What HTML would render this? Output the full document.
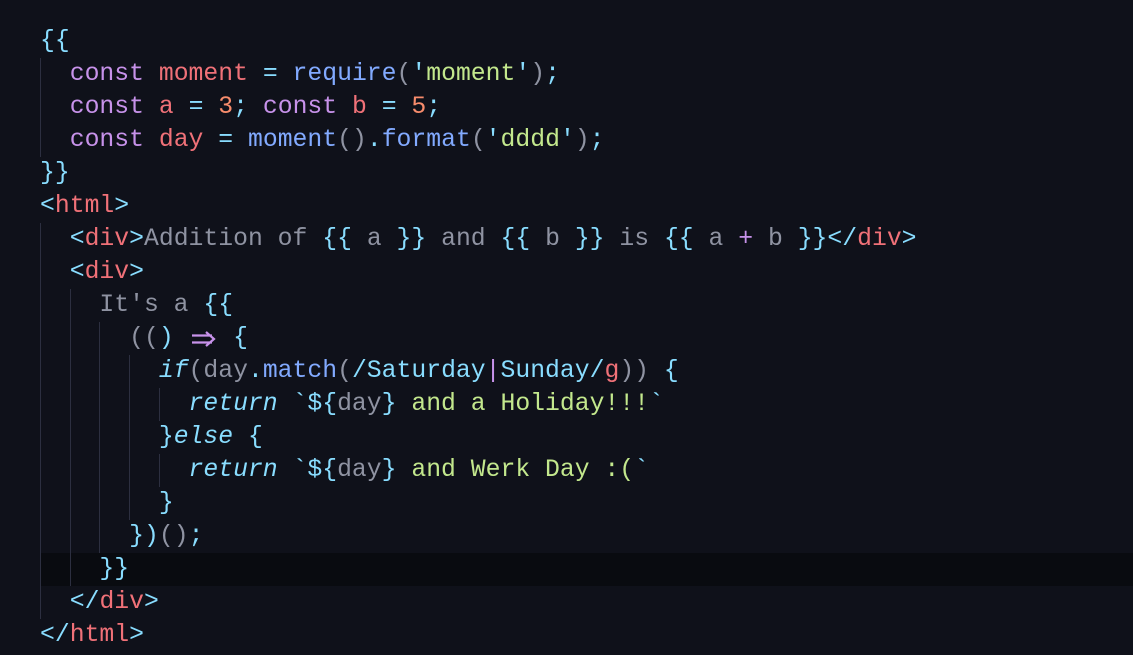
<!DOCTYPE html>
<html><head><style>
body{margin:0;width:1133px;height:655px;background:#0f111a;overflow:hidden;position:relative;font-family:"Liberation Mono",monospace;font-size:24.75px;}
.l{position:absolute;left:40px;height:33px;line-height:33px;white-space:pre;color:#a6accd;}
.g{position:absolute;width:1px;background:#2c2f40;}
.hl{position:absolute;left:40px;right:0;top:553px;height:33px;background:#090b10;}
.k{color:#c792ea}.v{color:#f07178}.p{color:#89ddff}.f{color:#82aaff}.s{color:#c3e88d}.n{color:#f78c6c}.t{color:#8f93a2}.i{font-style:italic;color:#89ddff}
.ar{display:inline-block;width:29.7px;height:33px;vertical-align:top;position:relative}
.ar svg{position:absolute;left:1px;top:8px}
</style></head><body>
<div class="hl"></div>
<div class="g" style="left:40px;top:58px;height:99px"></div>
<div class="g" style="left:40px;top:223px;height:396px"></div>
<div class="g" style="left:70px;top:289px;height:297px"></div>
<div class="g" style="left:99px;top:322px;height:231px"></div>
<div class="g" style="left:129px;top:355px;height:165px"></div>
<div class="g" style="left:159px;top:388px;height:33px"></div>
<div class="g" style="left:159px;top:454px;height:33px"></div>
<div class="l" style="top:25px"><span class="p">{{</span></div>
<div class="l" style="top:58px">  <span class="k">const</span> <span class="v">moment</span> <span class="p">=</span> <span class="f">require</span><span class="t">(</span><span class="p">'</span><span class="s">moment</span><span class="p">'</span><span class="t">)</span><span class="p">;</span></div>
<div class="l" style="top:91px">  <span class="k">const</span> <span class="v">a</span> <span class="p">=</span> <span class="n">3</span><span class="p">;</span> <span class="k">const</span> <span class="v">b</span> <span class="p">=</span> <span class="n">5</span><span class="p">;</span></div>
<div class="l" style="top:124px">  <span class="k">const</span> <span class="v">day</span> <span class="p">=</span> <span class="f">moment</span><span class="t">()</span><span class="p">.</span><span class="f">format</span><span class="t">(</span><span class="p">'</span><span class="s">dddd</span><span class="p">'</span><span class="t">)</span><span class="p">;</span></div>
<div class="l" style="top:157px"><span class="p">}}</span></div>
<div class="l" style="top:190px"><span class="p">&lt;</span><span class="v">html</span><span class="p">&gt;</span></div>
<div class="l" style="top:223px">  <span class="p">&lt;</span><span class="v">div</span><span class="p">&gt;</span><span class="t">Addition of </span><span class="p">{{</span> <span class="t">a</span> <span class="p">}}</span><span class="t"> and </span><span class="p">{{</span> <span class="t">b</span> <span class="p">}}</span><span class="t"> is </span><span class="p">{{</span> <span class="t">a</span> <span class="k">+</span> <span class="t">b</span> <span class="p">}}&lt;/</span><span class="v">div</span><span class="p">&gt;</span></div>
<div class="l" style="top:256px">  <span class="p">&lt;</span><span class="v">div</span><span class="p">&gt;</span></div>
<div class="l" style="top:289px">    <span class="t">It's a </span><span class="p">{{</span></div>
<div class="l" style="top:322px">      <span class="t">((</span><span class="p">)</span> <span class="ar"><svg width="28" height="18" viewBox="0 0 28 18"><path d="M2 5.5H22M2 12.5H22M16 2L24 9L16 16" fill="none" stroke="#c792ea" stroke-width="2.2"/></svg></span> <span class="p">{</span></div>
<div class="l" style="top:355px">        <span class="i" style="color:#89ddff">if</span><span class="t">(day</span><span class="p">.</span><span class="f">match</span><span class="t">(</span><span class="p">/Saturday</span><span class="k">|</span><span class="p">Sunday/</span><span class="v">g</span><span class="t">))</span> <span class="p">{</span></div>
<div class="l" style="top:388px">          <span class="i">return</span> <span class="p">`${</span><span class="t">day</span><span class="p">}</span><span class="s"> and a Holiday!!!</span><span class="p">`</span></div>
<div class="l" style="top:421px">        <span class="p">}</span><span class="i">else</span> <span class="p">{</span></div>
<div class="l" style="top:454px">          <span class="i">return</span> <span class="p">`${</span><span class="t">day</span><span class="p">}</span><span class="s"> and Werk Day :(</span><span class="p">`</span></div>
<div class="l" style="top:487px">        <span class="p">}</span></div>
<div class="l" style="top:520px">      <span class="p">})</span><span class="t">()</span><span class="p">;</span></div>
<div class="l" style="top:553px">    <span class="p">}}</span></div>
<div class="l" style="top:586px">  <span class="p">&lt;/</span><span class="v">div</span><span class="p">&gt;</span></div>
<div class="l" style="top:619px"><span class="p">&lt;/</span><span class="v">html</span><span class="p">&gt;</span></div>
</body></html>
